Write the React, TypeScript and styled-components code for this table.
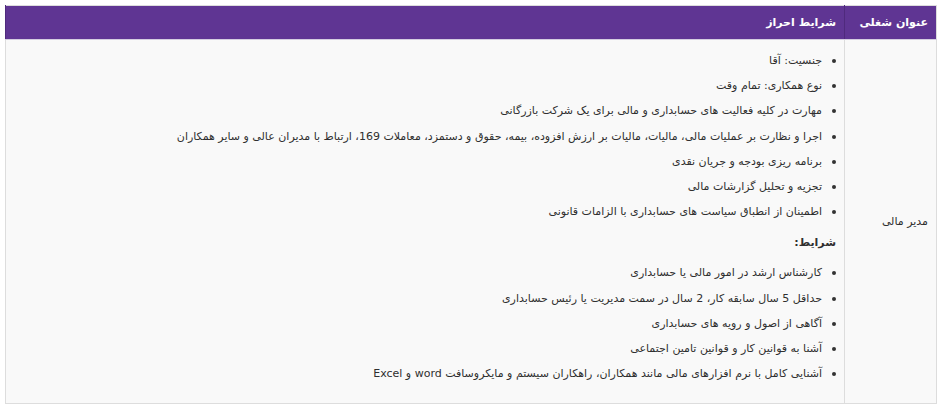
import React from "react";
import styled, { createGlobalStyle } from "styled-components";

const GlobalStyle = createGlobalStyle`
  body {
    margin: 0;
    background: #ffffff;
    font-family: "DejaVu Sans", "Noto Sans", sans-serif;
  }
`;

const duties = [
  "جنسیت: آقا",
  "نوع همکاری: تمام وقت",
  "مهارت در کلیه فعالیت های حسابداری و مالی برای یک شرکت بازرگانی",
  "اجرا و نظارت بر عملیات مالی، مالیات، مالیات بر ارزش افزوده، بیمه، حقوق و دستمزد، معاملات 169، ارتباط با مدیران عالی و سایر همکاران",
  "برنامه ریزی بودجه و جریان نقدی",
  "تجزیه و تحلیل گزارشات مالی",
  "اطمینان از انطباق سیاست های حسابداری با الزامات قانونی",
];

const requirements = [
  "کارشناس ارشد در امور مالی یا حسابداری",
  "حداقل 5 سال سابقه کار، 2 سال در سمت مدیریت یا رئیس حسابداری",
  "آگاهی از اصول و رویه های حسابداری",
  "آشنا به قوانین کار و قوانین تامین اجتماعی",
  "آشنایی کامل با نرم افزارهای مالی مانند همکاران، راهکاران سیستم و مایکروسافت word و Excel",
];

const App = () => {
  return (
    <>
      <GlobalStyle />
      <Table dir="rtl">
        <thead>
          <tr>
            <Head $width="92px">عنوان شغلی</Head>
            <Head>شرایط احراز</Head>
          </tr>
        </thead>
        <tbody>
          <tr>
            <Cell $center>مدیر مالی</Cell>
            <Cell>
              <List>
                {duties.map((d) => (
                  <Item key={d}>{d}</Item>
                ))}
              </List>
              <Title>شرایط:</Title>
              <List $last>
                {requirements.map((r) => (
                  <Item key={r}>{r}</Item>
                ))}
              </List>
            </Cell>
          </tr>
        </tbody>
      </Table>
    </>
  );
};

export default App;

const Table = styled.table`
  margin: 5px;
  width: 932px;
  border-collapse: collapse;
  border: 1px solid #dddddd;
  background-color: #f9f9f9;
  font-size: 11px;
  color: #2f2f2f;
`;

const Head = styled.th<{ $width?: string }>`
  width: ${(p) => p.$width || "auto"};
  height: 34px;
  padding: 0 8px;
  box-sizing: border-box;
  background-color: #5f3593;
  color: #ffffff;
  font-weight: bold;
  font-size: 11px;
  text-align: right;
  border-left: 1px solid #4f2a7d;
  border-bottom: 1px solid #d4cde0;
`;

const Cell = styled.td<{ $center?: boolean }>`
  padding: 8px;
  vertical-align: ${(p) => (p.$center ? "middle" : "top")};
  text-align: right;
  border-left: 1px solid #dddddd;
`;

const List = styled.ul<{ $last?: boolean }>`
  margin: 0 0 ${(p) => (p.$last ? "9px" : "6px")};
  padding: 0 14px 0 0;
  list-style: none;
`;

const Item = styled.li`
  position: relative;
  line-height: 25.2px;

  &::before {
    content: "";
    position: absolute;
    right: -14px;
    top: 11px;
    width: 4px;
    height: 4px;
    border-radius: 50%;
    background-color: #333333;
  }
`;

const Title = styled.p`
  margin: 0 0 5px;
  line-height: 25px;
  font-weight: bold;
`;
